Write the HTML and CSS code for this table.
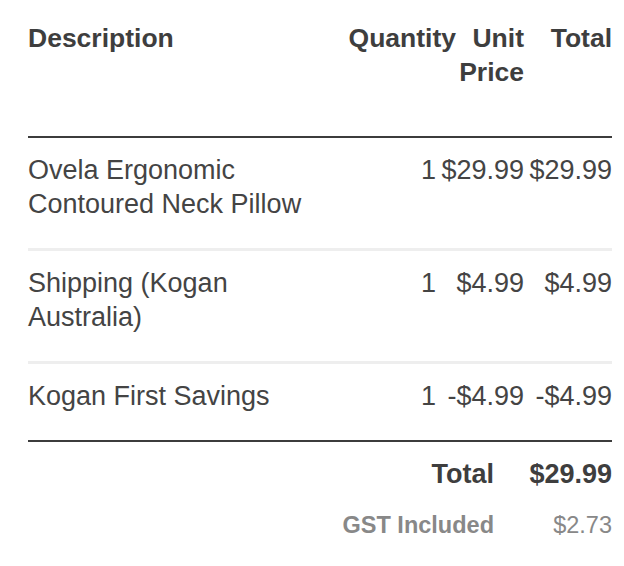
FILE: index.html
```html
<!DOCTYPE html>
<html lang="en">
<head>
<meta charset="utf-8">
<title>Invoice</title>
<link rel="stylesheet" href="styles.css">
</head>
<body>
<div class="invoice">
  <div class="head">
    <div class="c-desc">Description</div>
    <div class="c-num">Quantity</div>
    <div class="c-num">Unit Price</div>
    <div class="c-num">Total</div>
  </div>
  <div class="row light">
    <div class="c-desc">Ovela Ergonomic Contoured Neck Pillow</div>
    <div class="c-num">1</div>
    <div class="c-num">$29.99</div>
    <div class="c-num">$29.99</div>
  </div>
  <div class="row light">
    <div class="c-desc">Shipping (Kogan Australia)</div>
    <div class="c-num">1</div>
    <div class="c-num">$4.99</div>
    <div class="c-num">$4.99</div>
  </div>
  <div class="row last">
    <div class="c-desc">Kogan First Savings</div>
    <div class="c-num">1</div>
    <div class="c-num">-$4.99</div>
    <div class="c-num">-$4.99</div>
  </div>
  <div class="totals">
    <div class="t-label">Total</div>
    <div class="t-value">$29.99</div>
    <div class="t-label gst">GST Included</div>
    <div class="t-value gst-val">$2.73</div>
  </div>
</div>
</body>
</html>
```

FILE: styles.css
```css
html, body {
  margin: 0;
  padding: 0;
  background: #ffffff;
}

body {
  font-family: "Liberation Sans", Arial, sans-serif;
  font-size: 27px;
  line-height: 34px;
  color: #444444;
}

.invoice {
  padding: 21px 12px 0 28px;
}

.head {
  display: grid;
  grid-template-columns: 1fr 110px 68px 88px;
  font-size: 26.5px;
  font-weight: bold;
  color: #3e3e3e;
  padding-bottom: 47px;
  border-bottom: 2px solid #3c3c3c;
}

.row {
  display: grid;
  grid-template-columns: 300px 1fr 88px 88px;
  padding: 15px 0 27px;
}

.row.light {
  border-bottom: 3px solid #eeeeee;
}

.row.last {
  border-bottom: 2px solid #3c3c3c;
}

.c-desc {
  text-align: left;
}

.c-num {
  text-align: right;
}

.totals {
  display: grid;
  grid-template-columns: 1fr 118px;
  row-gap: 17px;
  padding-top: 15px;
}

.t-label {
  text-align: right;
  font-weight: bold;
  color: #3e3e3e;
}

.t-value {
  text-align: right;
  font-weight: bold;
  color: #3e3e3e;
}

.t-label.gst {
  font-size: 23.5px;
  color: #888888;
}

.t-value.gst-val {
  font-size: 23.5px;
  color: #888888;
  font-weight: normal;
}
```
